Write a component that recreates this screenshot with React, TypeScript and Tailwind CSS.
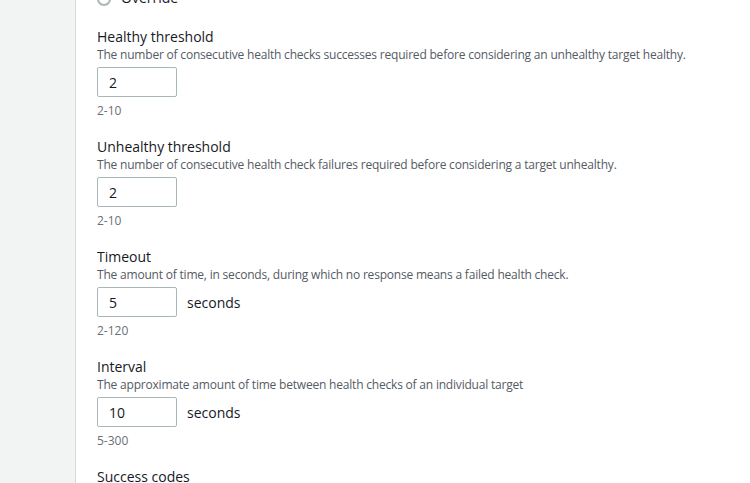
import React from 'react';

interface FieldProps {
  label: string;
  description: string;
  value: string;
  hint: string;
  unit?: string;
}

function Field({ label, description, value, hint, unit }: FieldProps) {
  return (
    <div className="h-[110px]">
      <div className="text-[14px] leading-[20px] text-[#16191f]">{label}</div>
      <div className="text-[12px] leading-[16px] tracking-[-0.2px] text-[#545b64]">{description}</div>
      <div className="mt-[4px] flex items-center">
        <div className="flex h-[30px] w-[80px] items-center rounded-[2px] border border-[#aab7b8] bg-white px-[11px] text-[14px] text-[#16191f]">
          {value}
        </div>
        {unit && <span className="ml-[10px] text-[14px] text-[#16191f]">{unit}</span>}
      </div>
      <div className="mt-[6px] text-[12px] leading-[16px] text-[#687078]">{hint}</div>
    </div>
  );
}

const fields: FieldProps[] = [
  {
    label: 'Healthy threshold',
    description:
      'The number of consecutive health checks successes required before considering an unhealthy target healthy.',
    value: '2',
    hint: '2-10',
  },
  {
    label: 'Unhealthy threshold',
    description: 'The number of consecutive health check failures required before considering a target unhealthy.',
    value: '2',
    hint: '2-10',
  },
  {
    label: 'Timeout',
    description: 'The amount of time, in seconds, during which no response means a failed health check.',
    value: '5',
    hint: '2-120',
    unit: 'seconds',
  },
  {
    label: 'Interval',
    description: 'The approximate amount of time between health checks of an individual target',
    value: '10',
    hint: '5-300',
    unit: 'seconds',
  },
];

export default function App() {
  return (
    <div className="flex h-[483px] w-[750px] overflow-hidden bg-white" style={{ fontFamily: '"Open Sans", Arial, sans-serif' }}>
      {/* sidebar */}
      <div className="w-[76px] shrink-0 border-r border-[#d5dbdb] bg-[#f2f3f3]" />

      <div className="flex-1 pl-[21px]">
        {/* radio option, scrolled mostly out of view */}
        <div className="-mt-[10px] flex h-[37px] items-start">
          <span className="mt-[2px] h-[14px] w-[14px] rounded-full border-2 border-[#aab7b8] bg-white" />
          <span className="ml-[10px] text-[14px] leading-[16px] text-[#16191f]">Override</span>
        </div>

        {fields.map((f) => (
          <Field key={f.label} {...f} />
        ))}

        <div className="text-[14px] leading-[20px] text-[#16191f]">Success codes</div>
      </div>
    </div>
  );
}
